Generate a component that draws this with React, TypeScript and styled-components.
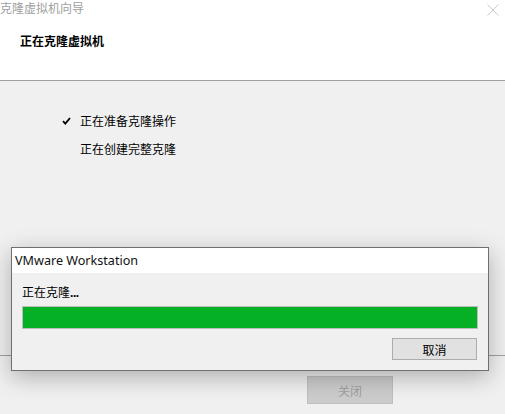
import styled, { createGlobalStyle } from 'styled-components';

const GlobalStyle = createGlobalStyle`
	html, body {
		margin: 0;
		padding: 0;
		background: #f0f0f0;
	}
	body {
		font-family: "Noto Sans CJK SC", "Noto Sans", sans-serif;
		font-size: 12px;
		color: #000;
	}
`;

const StyledWindow = styled.div`
	position: relative;
	width: 505px;
	height: 414px;
	display: flex;
	flex-direction: column;
	background: #f0f0f0;
	overflow: hidden;
`;

const StyledHeader = styled.header`
	height: 80px;
	flex: none;
	background: #fff;
	border-bottom: 1px solid #a0a0a0;
	display: flex;
	flex-direction: column;
`;

const StyledTitleBar = styled.div`
	height: 18px;
	display: flex;
	align-items: center;
	justify-content: space-between;
	padding-right: 6px;
`;

const StyledWindowTitle = styled.span`
	font-size: 12px;
	line-height: 18px;
	color: #a0a0a0;
	margin-top: -2px;
`;

const StyledCloseIcon = styled.svg`
	width: 12px;
	height: 12px;
	margin-top: 2px;
`;

const StyledHeading = styled.h1`
	margin: 0;
	padding: 14px 0 0 20px;
	font-size: 12px;
	line-height: 18px;
	font-weight: 700;
`;

const StyledBody = styled.main`
	flex: 1;
	padding: 26px 0 0 62px;
	display: flex;
	flex-direction: column;
`;

const StyledStep = styled.div`
	display: flex;
	align-items: center;
	height: 28px;
	line-height: 28px;
`;

const StyledCheckCell = styled.span`
	width: 18px;
	display: flex;
	align-items: center;
`;

const StyledFooter = styled.footer`
	height: 59px;
	flex: none;
	border-top: 1px solid #a0a0a0;
	display: flex;
	justify-content: flex-end;
	padding: 20px 112px 0 0;
	box-sizing: border-box;
`;

const StyledButton = styled.button<{ $disabled?: boolean }>`
	box-sizing: border-box;
	font-family: inherit;
	font-size: 12px;
	padding: 0;
	width: ${(p) => (p.$disabled ? '86px' : '85px')};
	height: ${(p) => (p.$disabled ? '28px' : '22px')};
	background: ${(p) => (p.$disabled ? '#cccccc' : '#e1e1e1')};
	border: 1px solid ${(p) => (p.$disabled ? '#bfbfbf' : '#adadad')};
	color: ${(p) => (p.$disabled ? '#a0a0a0' : '#000')};
`;

const StyledDialog = styled.div`
	position: absolute;
	left: 11px;
	top: 247px;
	width: 478px;
	height: 124px;
	box-sizing: border-box;
	border: 1px solid #6f6f6f;
	background: #f0f0f0;
	box-shadow: 0 6px 22px rgba(0, 0, 0, 0.28);
	display: flex;
	flex-direction: column;
`;

const StyledDialogTitle = styled.div`
	height: 25px;
	flex: none;
	background: #fff;
	padding-left: 3px;
	display: flex;
	align-items: center;
	font-family: "Noto Sans", "Open Sans", sans-serif;
	font-size: 12.6px;
	color: #111;
`;

const StyledDialogBody = styled.div`
	padding: 9px 10px 0 10px;
	display: flex;
	flex-direction: column;
`;

const StyledStatus = styled.div`
	line-height: 20px;
	margin-bottom: 3px;
`;

const StyledDots = styled.span`
	font-family: "Noto Sans", sans-serif;
	font-weight: 700;
	letter-spacing: -0.5px;
`;

const StyledProgress = styled.div`
	height: 23px;
	box-sizing: border-box;
	border: 1px solid #bcbcbc;
	background: #e6e6e6;
`;

const StyledProgressFill = styled.div`
	height: 100%;
	background: #06b025;
`;

const StyledDialogActions = styled.div`
	display: flex;
	justify-content: flex-end;
	padding: 9px 1px 0 0;
`;

const steps = [
	{ label: '正在准备克隆操作', done: true },
	{ label: '正在创建完整克隆', done: false },
];

export default function App() {
	const progress = 100;
	return (
		<>
			<GlobalStyle />
			<StyledWindow>
				<StyledHeader>
					<StyledTitleBar>
						<StyledWindowTitle>克隆虚拟机向导</StyledWindowTitle>
						<StyledCloseIcon viewBox="0 0 12 12">
							<path d="M0.5 0.5 L11.5 11.5 M11.5 0.5 L0.5 11.5" stroke="#c8c8c8" strokeWidth="1" fill="none" />
						</StyledCloseIcon>
					</StyledTitleBar>
					<StyledHeading>正在克隆虚拟机</StyledHeading>
				</StyledHeader>
				<StyledBody>
					{steps.map((s) => (
						<StyledStep key={s.label}>
							<StyledCheckCell>
								{s.done && (
									<svg width="9" height="8" viewBox="0 0 9 8">
										<path d="M1 4.2 L3.3 6.6 L8 1" stroke="#000" strokeWidth="1.8" fill="none" />
									</svg>
								)}
							</StyledCheckCell>
							{s.label}
						</StyledStep>
					))}
				</StyledBody>
				<StyledFooter>
					<StyledButton $disabled disabled>关闭</StyledButton>
				</StyledFooter>
				<StyledDialog>
					<StyledDialogTitle>VMware Workstation</StyledDialogTitle>
					<StyledDialogBody>
						<StyledStatus>
							正在克隆<StyledDots>...</StyledDots>
						</StyledStatus>
						<StyledProgress>
							<StyledProgressFill style={{ width: `${progress}%` }} />
						</StyledProgress>
						<StyledDialogActions>
							<StyledButton>取消</StyledButton>
						</StyledDialogActions>
					</StyledDialogBody>
				</StyledDialog>
			</StyledWindow>
		</>
	);
}
